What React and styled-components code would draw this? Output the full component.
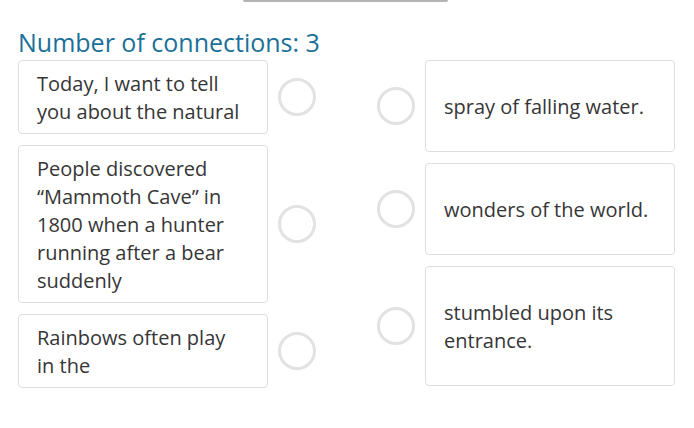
import React from "react";
import styled, { createGlobalStyle } from "styled-components";

const GlobalStyle = createGlobalStyle`
  body {
    margin: 0;
    background: #ffffff;
    font-family: "Open Sans", "Noto Sans", sans-serif;
  }
`;

const App = () => {
  const left = [
    "Today, I want to tell you about the natural",
    "People discovered \u201cMammoth Cave\u201d in 1800 when a hunter running after a bear suddenly",
    "Rainbows often play in the",
  ];
  const right = [
    "spray of falling water.",
    "wonders of the world.",
    "stumbled upon its entrance.",
  ];
  return (
    <Page>
      <GlobalStyle />
      <TopButton />
      <Title>Number of connections: 3</Title>
      <Board>
        <Column>
          {left.map((text, index) => (
            <Row key={index}>
              <LeftCard>{text}</LeftCard>
              <Dot />
            </Row>
          ))}
        </Column>
        <Column>
          {right.map((text, index) => (
            <Row key={index}>
              <Dot />
              <RightCard>{text}</RightCard>
            </Row>
          ))}
        </Column>
      </Board>
    </Page>
  );
};

export default App;

const Page = styled.div`
  width: 694px;
  height: 428px;
  padding: 0 18px;
  box-sizing: border-box;
  overflow: hidden;
`;

const TopButton = styled.div`
  width: 205px;
  height: 2px;
  margin-left: 225px;
  background-color: #b4b4b4;
  border-radius: 0 0 3px 3px;
`;

const Title = styled.h2`
  margin: 25px 0 3px;
  font-size: 25px;
  line-height: 30px;
  font-weight: 400;
  color: #1b7099;
`;

const Board = styled.div`
  display: flex;
  justify-content: space-between;
  width: 657px;
`;

const Column = styled.div`
  display: flex;
  flex-direction: column;
  gap: 11px;
`;

const Row = styled.div`
  display: flex;
  align-items: center;
  gap: 10px;
`;

const Card = styled.div`
  width: 250px;
  box-sizing: border-box;
  border: 1px solid #dedede;
  border-radius: 4px;
  background-color: #ffffff;
  font-size: 20px;
  line-height: 28px;
  color: #363636;
`;

const LeftCard = styled(Card)`
  padding: 9px 24px 7px 18px;
`;

const RightCard = styled(Card)`
  padding: 32px 18px 30px;
`;

const Dot = styled.div`
  width: 38px;
  height: 38px;
  box-sizing: border-box;
  border: 3px solid #e2e2e2;
  border-radius: 50%;
  flex-shrink: 0;
`;
